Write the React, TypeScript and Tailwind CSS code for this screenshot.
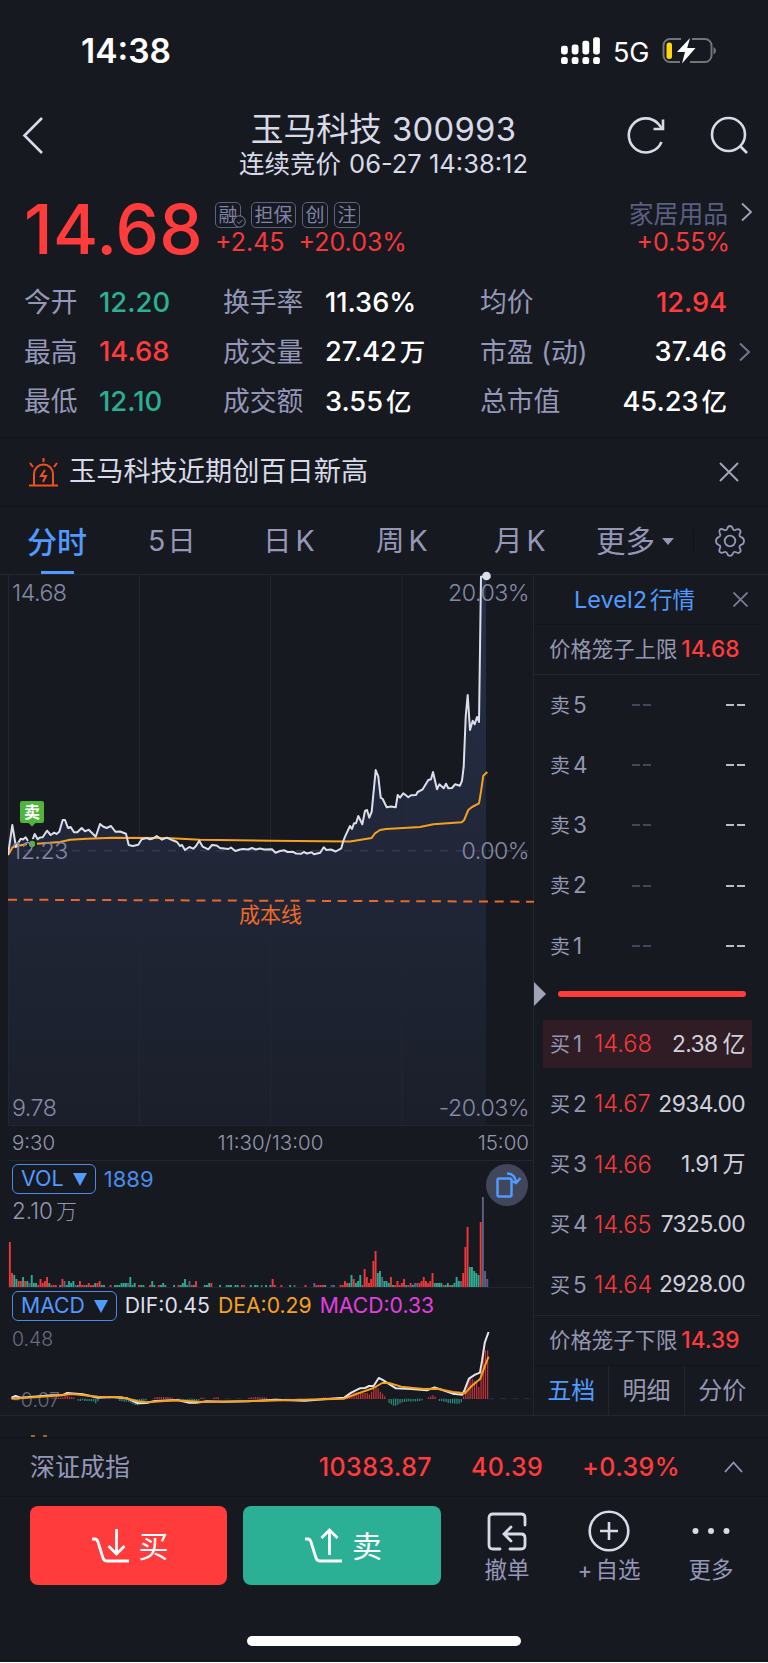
import type { ReactNode } from "react";

const PRICE_LINE =
  "8,855 12.3,825 16,847 18.5,842.5 20.7,838.7 23,839.5 25.7,837.3 28,841 32,841 34.7,834 37.7,839.3 40,837.5 42.7,837.3 47,830.7 50.7,835 54.3,832.7 56.5,834 59.3,831.7 62.7,820 65,820 68,828 70.7,827 74,832.3 77.3,832.3 81.7,828 85,831.3 88.7,829.7 92,833 95.7,836.7 98,830 100,824 103,826.5 106.7,828 111,826 115.3,831.7 120,831.5 126,833.7 128.7,845 132.7,846 138.3,844.7 141.7,839.3 146.7,838 150,839.3 153,838.5 156.7,836 162,839.7 166.7,837.7 172.7,840.3 177,842 180,846 182,845 185,850 189.3,847 193.3,848.7 196,846 199.3,840.7 202.7,846.7 208.3,849.3 212,845 216.7,845.5 220,848 228.3,849 231,847.5 235.3,851 240,849.5 243.3,849 248,849.5 252,848 256,849.5 260,848.5 264,849.5 272,849.3 275.5,852.7 280,851 284.4,850.3 287.5,852 292.7,851.7 296,853.5 301.3,853.7 304,852 307,853.5 311.6,852.3 314,854.3 320.2,852.7 323.7,847.3 326.4,850 331,849.5 335.7,851.5 341.3,848.3 343,842 345,836.7 350,826 352,829 354,823.3 356,823.3 358.3,816 362.3,824.3 365,811 367,810 369.3,817.7 371.7,811.7 375.7,770 378.3,776.7 380.7,797.7 382.7,799 386.7,807.3 391,806.5 395.7,807.3 397.7,795 400,797.7 403.3,793.3 408.3,797.3 411,795.3 416,795 417.7,792 422.7,789.3 428.3,780 431,779.3 433,772 437,789.3 439.3,784.3 443.7,788.3 446,783.7 448.3,788.3 452,788 455,784.3 460,785.7 462,780.7 463.7,766.7 465.7,716.7 467.7,695 470,730 472.7,720.7 474.7,724.3 477,717 479,722 481,576.7 486,576";

const AVG_LINE =
  "8,855 10,852 12.3,847.5 16,846 28,844 36.7,843.7 60,842 70,839.7 86.7,838.7 113,837.7 166.7,838 200,839.7 270,840.7 350,841.5 371.7,838 375,833.3 380,830 386,829 420,827 433.3,824.3 461.7,822.3 464,820.3 468.3,810 472,807 479,803.3 481,791.7 483.3,775.7 487.3,772";

// one entry per minute: height in px + color (r = up, g = down, n = flat)
const VOLUME =
  "45r 14r 12g 8g 6r 6r 10g 6r 6g 4n 12g 4g 4g 2r 8r 4r 6r 10r 4g 2r 2r 2r 0r 2g 8r 6n 2g 6g 4g 6g 2n 2g 6r 2r 2r 2g 4r 2r 2r 4g 4r 6r 2g 2g 0r 0r 2r 0r 2g 2g 2g 4g 4g 4g 4n 10g 2g 4g 0g 2r 2g 2g 0r 0g 2r 6g 2g 0g 2r 2g 4g 2g 0r 0r 0r 2g 0g 2r 2g 4g 8g 2g 6n 2r 2g 6r 0g 0g 0g 2g 2g 4g 4r 0r 0g 0r 2g 0r 0g 2g 2g 2g 0g 2g 2g 0r 2r 2n 0r 0r 2g 0r 2g 2g 0r 2n 0g 2g 0r 2g 8r 2r 0r 0r 2r 0g 0g 0r 2g 0g 2n 0g 0g 0r 0r 2r 0r 0g 0g 4n 2r 2r 2r 2r 2g 0g 0g 2n 2n 0g 0r 2r 2r 6r 4r 4g 12g 8r 4g 6g 12g 2r 18r 10r 4r 8r 26r 36r 14g 16g 10n 6g 6g 4g 10r 2g 2r 6r 2r 4r 8r 2g 2n 4r 2g 4n 4n 4r 6r 10r 6r 4r 6r 14r 4g 4g 4g 4g 2r 2g 4g 2r 2g 4g 10g 6g 6n 14r 40r 60r 20g 20g 16g 14g 12g 65r 90n 16n 8n"
    .split(" ");

const MACD_RUNS = [
  { from: 1, values: [6, 10, 8, 5, 3] },
  { from: 19, values: [5, 5, 4, 4, 4, 5, 10, 9, 7, 6, 5] },
  { from: 31, values: [-5, -6, -4, -6, -6, -6, -7, -7, -13, -7] },
  { from: 50, values: [-6, -7, -8, -8, -9, -12, -16, -18, -19, -16, -12, -8, -5] },
  { from: 66, values: [4, 6, 6, 6, 6, 6, 6, 5, 4] },
  { from: 79, values: [-5, -6, -7, -8, -8, -6, -6, -4] },
  { from: 87, values: [4, 4] },
  { from: 93, values: [4, 5, 5] },
  { from: 109, values: [4, 5, 5, 6, 6, 5, 5, 5, 4] },
  { from: 143, values: [5, 5, 4, 4, 5, 5, 5, 5, 4, 6, 10, 14, 18, 20, 20, 20, 20, 18, 18, 18, 18, 14, 22, 30, 38, 32, 22, 16, 8] },
  { from: 173, values: [-12, -16, -20, -20, -17, -13, -10, -9, -8, -7, -8, -7, -7, -7, -6, -4] },
  { from: 191, values: [5, 8, 11, 7] },
  { from: 196, values: [-6, -6, -8, -9, -12, -13, -13, -14, -14, -14, -10] },
  { from: 207, values: [8, 34, 50, 60, 60, 55, 48, 36, 88, 136, 146, 146] },
];

const DIF_LINE =
  "33,895 45,890 60,895 150,888 180,888 195,881 240,885 285,895 320,893 370,897 400,912 425,911 450,905 515,902 550,910 570,910 600,906 650,907 720,906 800,901 885,904 940,900 1000,895 1020,880 1045,867 1060,866 1072,860 1085,860 1100,836 1110,841 1150,867 1195,869 1240,873 1262,864 1285,872 1315,883 1343,886 1350,870 1362,838 1380,826 1394,820 1400,785 1408,730 1419,698";

const DEA_LINE =
  "33,898 150,890 210,884 285,892 350,893 400,906 425,909 510,903 590,908 700,906 850,902 1000,898 1040,882 1085,866 1110,851 1130,851 1165,862 1230,869 1270,868 1315,878 1350,882 1370,860 1395,838 1410,795 1419,772";

const stats = [
  { label: "今开", value: "12.20", color: "text-[#2bb092]", label2: "换手率", value2: "11.36%", unit2: "", label3: "均价", value3: "12.94", unit3: "", color3: "text-[#ff3b3b]" },
  { label: "最高", value: "14.68", color: "text-[#ff3b3b]", label2: "成交量", value2: "27.42", unit2: "万", label3: "市盈 (动)", value3: "37.46", unit3: "", color3: "text-white" },
  { label: "最低", value: "12.10", color: "text-[#2bb092]", label2: "成交额", value2: "3.55", unit2: "亿", label3: "总市值", value3: "45.23", unit3: "亿", color3: "text-white" },
];

const bids = [
  { level: 1, price: "14.68", amount: "2.38", unit: "亿" },
  { level: 2, price: "14.67", amount: "2934.00", unit: "" },
  { level: 3, price: "14.66", amount: "1.91", unit: "万" },
  { level: 4, price: "14.65", amount: "7325.00", unit: "" },
  { level: 5, price: "14.64", amount: "2928.00", unit: "" },
];

function StatusBar() {
  const columns = [12, 14, 19, 24];
  return (
    <div className="flex h-[100px] items-center pl-[81px] pr-[51px] text-white">
      <span className="mt-[4px] text-[33.500px] font-semibold leading-none">14:38</span>
      <div className="ml-auto flex items-center">
        <svg width="40" height="28" viewBox="0 0 40 28" fill="currentColor" className="mt-[2px]">
          {columns.map((h, i) => (
            <g key={i}>
              <rect x={i * 10.7} y={17.5 - h * 0.72} width="6.8" height={h * 0.72} rx="2.4" />
              <rect x={i * 10.7} y="20" width="6.8" height="7" rx="2.6" />
            </g>
          ))}
        </svg>
        <span className="ml-[12px] mt-[4px] text-[27px] leading-none tracking-[-0.300px]">5G</span>
        <svg width="55" height="28" viewBox="0 0 55 28" fill="none" className="ml-[13px] mt-[1px]">
          <path d="M19 2H8a6.5 6.5 0 0 0-6.500 6.500v10a6.500 6.500 0 0 0 6.500 6.500h10M30 2h13a6.500 6.500 0 0 1 6.500 6.500v10a6.500 6.500 0 0 1-6.500 6.500H28" stroke="#74757b" strokeWidth="2" />
          <path d="M51.500 10v7.500q2.500-1 2.500-3.750t-2.500-3.750Z" fill="#74757b" />
          <rect x="4.500" y="5.500" width="5.500" height="16.500" rx="2.500" fill="#ffd60a" />
          <path d="M28 1 15 15h8l-3 11.500L33.500 11h-8.300Z" fill="#fff" />
        </svg>
      </div>
    </div>
  );
}

function Header() {
  return (
    <div className="flex h-[90px] items-center justify-between pl-[22px] pr-[20px] text-[#d8dae8]">
      <svg width="118" height="40" viewBox="0 0 118 40" fill="none" stroke="currentColor" strokeWidth="2.600" className="-mt-[20px]">
        <path d="M20 3 2.500 20.500 20 38" />
      </svg>
      <div className="-mt-[2px] flex flex-col items-center">
        <div className="flex items-center text-[32.800px] leading-[40px]">
          <span>玉马科技</span>
          <span className="ml-[10px] tracking-[0.300px]">300993</span>
        </div>
        <div className="flex items-center text-[25.500px] leading-[30px]">
          <span>连续竞价</span>
          <span className="ml-[8px]">06-27 14:38:12</span>
        </div>
      </div>
      <svg width="121" height="40" viewBox="0 0 121 40" fill="none" stroke="currentColor" strokeWidth="2.600" className="-mt-[20px]">
        <path d="M34.500 27A17 17 0 1 1 31 8.500l4 5" />
        <path d="M36 4.500V14H26.500" />
        <circle cx="101.500" cy="19.500" r="16.500" />
        <path d="m113 31 7 7" />
      </svg>
    </div>
  );
}

function Tag({ children, checked }: { children: ReactNode; checked?: boolean }) {
  return (
    <span className="relative flex h-[26px] items-center rounded-[5px] border border-[#5d6182] px-[2.500px] text-[19px] leading-none text-[#7f83a5]">
      {children}
      {checked && (
        <svg width="13" height="13" viewBox="0 0 13 13" fill="#171921" stroke="#7f83a5" className="absolute -bottom-px -right-[6px]">
          <circle cx="6.500" cy="6.500" r="5.700" />
          <path d="m4 6.500 2 2 3.300-3.500" />
        </svg>
      )}
    </span>
  );
}

function Quote() {
  return (
    <div className="h-[247px] pl-[24px] pr-[15px] pt-[12px]">
      <div className="flex h-[76px]">
        <span className="w-[191px] text-[69px] font-medium leading-[54px] tracking-[0.300px] text-[#ff3b3b]">14.68</span>
        <div>
          <div className="flex gap-[6px]">
            <div className="mr-[4px]"><Tag checked>融</Tag></div>
            <Tag>担保</Tag>
            <Tag>创</Tag>
            <Tag>注</Tag>
          </div>
          <div className="flex gap-[14px] text-[25px] leading-[29px] text-[#f5383a]">
            <span>+2.45</span>
            <span>+20.03%</span>
          </div>
        </div>
        <div className="ml-auto flex">
          <div className="mr-[13px] text-right">
            <div className="text-[24.800px] leading-[24px] text-[#5b5f80]">家居用品</div>
            <div className="-mr-[2px] mt-[2px] text-[25px] leading-[29px] text-[#f5383a]">+0.55%</div>
          </div>
          <svg width="12" height="20" viewBox="0 0 12 20" fill="none" stroke="#a3a6b8" strokeWidth="1.800">
            <path d="m1 1.500 9 8.500-9 8.500" />
          </svg>
        </div>
      </div>
      {stats.map((s) => (
        <div key={s.label} className="flex h-[49.300px] items-center text-[26.800px] leading-none">
          <span className="w-[75px] text-[#9497b6]">{s.label}</span>
          <span className={`w-[124px] text-[27.400px] font-medium ${s.color}`}>{s.value}</span>
          <span className="w-[102px] text-[#9497b6]">{s.label2}</span>
          <span className="w-[155px] text-[27.200px] font-medium text-white">
            {s.value2}
            {s.unit2 && <span className="ml-[3px] text-[25.500px]">{s.unit2}</span>}
          </span>
          <span className="text-[#9497b6]">{s.label3}</span>
          <span className={`ml-auto text-[27.200px] font-medium ${s.color3}`}>
            {s.value3}
            {s.unit3 && <span className="ml-[3px] text-[25.500px]">{s.unit3}</span>}
          </span>
          <span className="ml-[11px] w-[15px] pl-px">
            {s.value3 === "37.46" && (
              <svg width="12" height="20" viewBox="0 0 12 20" fill="none" stroke="#74778c" strokeWidth="2">
                <path d="m1 1.500 9 8.500-9 8.500" />
              </svg>
            )}
          </span>
        </div>
      ))}
    </div>
  );
}

function Notice() {
  return (
    <div className="flex h-[70px] items-center border-y border-[#11131a] pl-[28px] pr-[29px]">
      <svg width="31" height="31" viewBox="0 0 31 31" fill="none" stroke="#f4501e" strokeWidth="2" className="shrink-0">
        <path d="M1 28.500h29M6 28V17a9.500 9.500 0 0 1 19 0v11M15.500 1v4M2 6l3 4M29 6l-3 4" />
        <path d="m17 13-4 6h5l-3 6" />
      </svg>
      <span className="ml-[10px] text-[27.200px] leading-none text-[#d8dae8]">玉马科技近期创百日新高</span>
      <svg width="20" height="20" viewBox="0 0 20 20" fill="none" stroke="#a0a3b8" strokeWidth="2" className="ml-auto">
        <path d="m1 1 18 18M19 1 1 19" />
      </svg>
    </div>
  );
}

function Tabs() {
  return (
    <div className="flex h-[68px] items-center border-b border-[#222532] pl-[27px] pr-[22px] pt-[2px] text-[28.500px] leading-none text-[#9497b6]">
      <div className="relative -mt-[2px] flex h-[67px] w-[121px] items-center pt-[2px] text-[30px] font-medium text-[#519aff]">
        分时
        <div className="absolute bottom-0 left-[14px] h-[3px] w-[33px] bg-[#519aff]" />
      </div>
      <span className="w-[115px]">5<span className="ml-[2px]">日</span></span>
      <span className="w-[113px]">日<span className="ml-[4px]">K</span></span>
      <span className="w-[118px]">周<span className="ml-[4px]">K</span></span>
      <span className="w-[102px]">月<span className="ml-[4px]">K</span></span>
      <span className="text-[29.500px]">更多</span>
      <div className="ml-[7px] border-x-[6px] border-t-[7px] border-x-transparent border-t-[#9497b6]" />
      <div className="ml-[19px] h-[24px] w-px bg-[#11131a]" />
      <svg width="32" height="32" viewBox="0 0 32 32" fill="none" stroke="#9497b6" strokeWidth="1.800" strokeLinejoin="round" className="-mt-[2px] ml-auto">
        <path d="M13.300 3.500q.8-2.500 2.700-2.500t2.700 2.500 3.200 1.200q2.500-1.200 3.900.1t.1 3.900 1.300 3.400q2.800 1 2.800 3.900t-2.800 3.900-1.300 3.400.1 3.900-3.900.1q-2.400-1.200-3.200 1.200t-2.900 2.400-2.900-2.400-3.200-1.200q-2.500 1.200-3.900-.1t-.1-3.900-1.300-3.400q-2.600-1-2.600-3.900t2.600-3.900 1.300-3.400-.1-3.900 3.900-.1 3.600-1.200Z" />
        <circle cx="16" cy="16" r="5.300" />
      </svg>
    </div>
  );
}

function PriceChart() {
  return (
    <div className="relative h-[551px] text-[23.200px] font-light leading-none tracking-[-0.500px] text-[#8689a3]">
      <svg width="526" height="558" viewBox="8 568 526 558" className="absolute -top-[7px] left-0">
        <defs>
          <linearGradient id="area" x1="0" y1="575" x2="0" y2="1125" gradientUnits="userSpaceOnUse">
            <stop offset="0" stopColor="#26304a" />
            <stop offset="0.500" stopColor="#212738" />
            <stop offset="1" stopColor="#1b1f2b" />
          </linearGradient>
        </defs>
        <polygon points={`8,1125 ${PRICE_LINE} 486,1125`} fill="url(#area)" />
        <path d="M8.500 575v551M139.500 575v551M270.500 575v551M402 575v551M533.500 575v551" stroke="#222532" strokeWidth="1" />
        <path d="M8 1125.500h526" stroke="#222532" />
        <path d="M24 850.700h510" stroke="#34384b" strokeWidth="1.500" strokeDasharray="8 8" />
        <path d="M8 899.700 534 901.700" stroke="#e8682a" strokeWidth="2" strokeDasharray="9 6.700" />
        <polyline points={AVG_LINE} fill="none" stroke="#f5a11f" strokeWidth="2" strokeLinejoin="round" />
        <polyline points={PRICE_LINE} fill="none" stroke="#dcdfeb" strokeWidth="2" strokeLinejoin="round" />
        <circle cx="486.500" cy="576" r="4.300" fill="#dcdfeb" />
        <circle cx="32" cy="844" r="5" fill="#171921" />
        <circle cx="32" cy="844" r="3.200" fill="#4fb53c" />
        <path d="M22 801h20a2 2 0 0 1 2 2v18a2 2 0 0 1-2 2h-6.500l-3.500 3.500-3.500-3.500H22a2 2 0 0 1-2-2v-18a2 2 0 0 1 2-2Z" fill="#4fb53c" />
      </svg>
      <span className="absolute left-[4px] top-[7px]">14.68</span>
      <span className="absolute right-[4px] top-[7px]">20.03%</span>
      <span className="absolute left-[4px] top-[265px]">12.23</span>
      <span className="absolute right-[4px] top-[265px]">0.00%</span>
      <span className="absolute bottom-[6px] left-[4px]">9.78</span>
      <span className="absolute bottom-[6px] right-[4px]">-20.03%</span>
      <span className="absolute left-[231px] top-[329px] text-[21px] font-normal tracking-normal text-[#f06a28]">成本线</span>
      <span className="absolute left-[16px] top-[229px] text-[16px] font-bold tracking-normal text-white">卖</span>
    </div>
  );
}

function IndicatorButton({ children }: { children: ReactNode }) {
  return (
    <div className="flex h-[30px] items-center gap-[9px] rounded-[6px] border border-[#4a8be6] px-[8px] leading-none text-[#519aff]">
      {children}
      <div className="border-x-[7.500px] border-t-[13px] border-x-transparent border-t-[#519aff]" />
    </div>
  );
}

function Volume() {
  return (
    <div className="relative h-[127px] border-t border-[#222532]">
      <svg width="526" height="100" viewBox="0 0 526 100" className="absolute bottom-0 left-0">
        {VOLUME.map((bar, i) => {
          const h = parseInt(bar);
          const fill = bar.endsWith("r") ? "#ef383a" : bar.endsWith("g") ? "#2bab90" : "#5e6281";
          return <rect key={i} x={0.9 + i * 2.19} y={100 - h} width="1.9" height={h} fill={fill} />;
        })}
      </svg>
      <div className="flex items-center pl-[4px] pt-[3px] text-[21.500px] text-[#4a8be6]">
        <IndicatorButton>VOL</IndicatorButton>
        <span className="ml-[8px] text-[22px] leading-none">1889</span>
      </div>
      <div className="pl-[4px] pt-[6px] text-[22.500px] font-light leading-none text-[#9497ae]">
        2.10<span className="ml-[3px] text-[21px]">万</span>
      </div>
      <div className="absolute right-[5px] top-[3px] flex size-[42px] items-center justify-center rounded-full bg-[#42465b]">
        <svg width="28" height="28" viewBox="0 0 28 28" fill="none" stroke="#519aff" strokeWidth="2.500">
          <rect x="4.500" y="7.500" width="14" height="18" rx="1.500" />
          <path d="M14 2.500c5 0 8 2.500 9 8M18 9.500l5 2.500 4.500-5" />
        </svg>
      </div>
    </div>
  );
}

function Macd() {
  return (
    <div className="relative h-[128px] border-t border-[#222532]">
      <svg width="526" height="96" viewBox="23 659 1528 288" preserveAspectRatio="none" className="absolute bottom-0 left-0">
        <path d="M24 898h1526" stroke="#2a2d3b" strokeDasharray="6 6" vectorEffect="non-scaling-stroke" />
        {MACD_RUNS.map((run) =>
          run.values.map((v, i) => (
            <rect
              key={`${run.from}-${i}`}
              x={28 + (run.from + i) * 6.36}
              y={v > 0 ? 899 - v : 899}
              width="3.6"
              height={Math.abs(v)}
              fill={v > 0 ? "#c23336" : "#278f7a"}
            />
          ))
        )}
      </svg>
      <span className="absolute bottom-[5px] left-[4px] text-[19.500px] font-light leading-none text-[#696c80]">-0.07</span>
      <svg width="526" height="96" viewBox="23 659 1528 288" preserveAspectRatio="none" className="absolute bottom-0 left-0" fill="none" strokeWidth="2">
        <polyline points={DIF_LINE} stroke="#e4e6ee" strokeLinejoin="round" vectorEffect="non-scaling-stroke" />
        <polyline points={DEA_LINE} stroke="#f5a11f" strokeLinejoin="round" vectorEffect="non-scaling-stroke" />
      </svg>
      <div className="flex items-center pl-[4px] pt-[3px] text-[21.200px] text-[#4a8be6]">
        <IndicatorButton>MACD</IndicatorButton>
        <span className="ml-[8px] leading-none text-[#dcdfeb]">DIF:0.45</span>
        <span className="ml-[8px] leading-none text-[#f5a11f]">DEA:0.29</span>
        <span className="ml-[8px] leading-none text-[#e23fe0]">MACD:0.33</span>
      </div>
      <div className="pl-[4px] pt-[9px] text-[19.500px] font-light leading-none text-[#696c80]">0.48</div>
    </div>
  );
}

function OrderBook() {
  return (
    <div className="flex h-[841px] w-[226px] flex-col text-[#9497b0]">
      <div className="flex h-[50px] items-center border-b border-[#11131a] pl-[40px] pr-[12px]">
        <span className="text-[23.500px] leading-none text-[#519aff]">Level2<span className="ml-[3px] text-[22.500px]">行情</span></span>
        <svg width="15" height="15" viewBox="0 0 15 15" fill="none" stroke="#7d8096" strokeWidth="1.600" className="ml-auto">
          <path d="m.5.500 14 14M14.500.500l-14 14" />
        </svg>
      </div>
      <div className="flex h-[50px] items-center border-b border-[#222532] pl-[15px] leading-none">
        <span className="text-[21.400px]">价格笼子上限</span>
        <span className="ml-[4px] text-[22.600px] font-medium text-[#ff3b3b]">14.68</span>
      </div>
      {[5, 4, 3, 2, 1].map((level) => (
        <div key={level} className="flex h-[60.200px] items-center pl-[16px] pr-[15px] leading-none">
          <span className="w-[82px] text-[20px]">卖<span className="ml-[3px] text-[22.500px]">{level}</span></span>
          <span className="flex gap-[3px]">
            <i className="h-[2px] w-[8px] bg-[#44475c]" />
            <i className="h-[2px] w-[8px] bg-[#44475c]" />
          </span>
          <span className="ml-auto flex gap-[3px]">
            <i className="h-[2px] w-[8px] bg-[#b9bbc8]" />
            <i className="h-[2px] w-[8px] bg-[#b9bbc8]" />
          </span>
        </div>
      ))}
      <div className="mb-[2px] flex h-[36px] items-center">
        <div className="border-y-[12px] border-l-[12px] border-y-transparent border-l-[#a0a3b5]" />
        <div className="ml-[12px] h-[6px] w-[188px] rounded-full bg-[#ff3b3b]" />
      </div>
      {bids.map((b) => (
        <div key={b.level} className="flex h-[60.200px] items-center pl-[9px] pr-[8px] leading-none">
          <div className={`flex h-[48px] w-full items-center px-[7px] ${b.level === 1 ? "bg-[#2f1c24]" : ""}`}>
            <span className="w-[44px] text-[20px]">买<span className="ml-[3px] text-[22.500px]">{b.level}</span></span>
            <span className="text-[23.500px] font-light text-[#f5383a]">{b.price}</span>
            <span className="ml-auto text-[22.800px] tracking-[-0.600px] text-[#cfd1dc]">
              {b.amount}
              {b.unit && <span className="ml-[5px] text-[23px]">{b.unit}</span>}
            </span>
          </div>
        </div>
      ))}
      <div className="flex h-[51px] items-center border-y border-t-[#222532] border-b-[#11131a] pl-[15px] leading-none">
        <span className="text-[21.400px]">价格笼子下限</span>
        <span className="ml-[4px] text-[22.600px] font-medium text-[#ff3b3b]">14.39</span>
      </div>
      <div className="flex flex-1 items-center divide-x divide-[#222532] text-[24px] leading-none">
        <span className="flex h-full w-[76px] items-center justify-center text-[#519aff]">五档</span>
        <span className="flex h-full w-[76px] items-center justify-center">明细</span>
        <span className="flex h-full w-[76px] items-center justify-center">分价</span>
      </div>
    </div>
  );
}

function IndexBar() {
  return (
    <div className="flex h-[60px] items-center border-y border-[#11131a] pl-[30px] pr-[25px] text-[25px] font-medium leading-none tracking-[0.400px] text-[#ff3b3b]">
      <span className="font-normal tracking-normal text-[#9497b6]">深证成指</span>
      <span className="ml-auto">10383.87</span>
      <span className="ml-[39px]">40.39</span>
      <span className="ml-[39px]">+0.39%</span>
      <svg width="19" height="12" viewBox="0 0 19 12" fill="none" stroke="#9497b6" strokeWidth="1.800" className="ml-[44px]">
        <path d="m1 11 8.500-9.500L18 11" />
      </svg>
    </div>
  );
}

function Actions() {
  return (
    <div className="flex h-[138px] items-start pl-[30px] pr-[34px] pt-[9px] leading-none">
      <div className="flex h-[79px] w-[197px] items-center justify-center gap-[9px] rounded-[8px] bg-[#ff3b3b] pl-[3px] text-[30px] text-white">
        <svg width="38" height="36" viewBox="0 0 38 36" fill="none" stroke="currentColor" strokeWidth="2.800">
          <path d="M0 11h3q2 0 3 3l5 16q1 3 4 3h22M24.500 1v25M16.500 18l8 8 8-8" />
        </svg>
        买
      </div>
      <div className="ml-[16px] flex h-[79px] w-[198px] items-center justify-center gap-[9px] rounded-[8px] bg-[#2bb096] pl-[3px] text-[30px] text-white">
        <svg width="38" height="36" viewBox="0 0 38 36" fill="none" stroke="currentColor" strokeWidth="2.800">
          <path d="M0 11h3q2 0 3 3l5 16q1 3 4 3h22M24.500 27V2M16.500 10l8-8 8 8" />
        </svg>
        卖
      </div>
      <div className="ml-[43px] flex w-[46px] flex-col items-center text-[22.500px] text-[#9497b6]">
        <svg width="42" height="42" viewBox="0 0 42 42" fill="none" stroke="#d8dae8" strokeWidth="2.800" strokeLinecap="round" className="mb-[7px] mt-[4px]">
          <path d="M39 15V8q0-4-4-4H7Q3 4 3 8v27q0 4 4 4h7M24 39h11q4 0 4-4v-7q0-4-4-4H19M25 17l-7 7 7 7" />
        </svg>
        撤单
      </div>
      <div className="ml-[47px] flex w-[64px] flex-col items-center text-[22.500px] text-[#9497b6]">
        <svg width="42" height="42" viewBox="0 0 42 42" fill="none" stroke="#d8dae8" strokeWidth="2.600" className="mb-[7px] mt-[4px]">
          <circle cx="21" cy="21" r="19.300" />
          <path d="M21 12v18M12 21h18" />
        </svg>
        <span className="whitespace-nowrap">+<span className="ml-[3px]">自选</span></span>
      </div>
      <div className="ml-auto flex w-[46px] flex-col items-center text-[22.500px] text-[#9497b6]">
        <svg width="42" height="42" viewBox="0 0 42 42" fill="#d8dae8" className="mb-[7px] mt-[4px]">
          <circle cx="5.500" cy="21" r="3" />
          <circle cx="21" cy="21" r="3" />
          <circle cx="36.500" cy="21" r="3" />
        </svg>
        更多
      </div>
    </div>
  );
}

export default function App() {
  return (
    <div className="flex h-[1663px] w-[768px] flex-col overflow-hidden border-b border-white bg-[#171921] font-['Inter','Noto_Sans_CJK_SC',sans-serif]">
      <StatusBar />
      <Header />
      <Quote />
      <Notice />
      <Tabs />
      <div className="flex h-[841px] border-b border-[#222532] pl-[8px]">
        <div className="w-[526px] border-r border-[#222532]">
          <PriceChart />
          <div className="grid h-[34px] grid-cols-3 items-center pl-[4px] pr-[4px] text-[20.500px] font-light leading-none text-[#9497ae]">
            <span>9:30</span>
            <span className="text-center">11:30/13:00</span>
            <span className="text-right">15:00</span>
          </div>
          <Volume />
          <Macd />
        </div>
        <OrderBook />
      </div>
      <div className="flex h-[21px] items-end gap-[8px] pl-[31px]">
        <div className="h-[2px] w-[4px] bg-[#a8641a]" />
        <div className="h-[2px] w-[4px] bg-[#a8641a]" />
      </div>
      <IndexBar />
      <Actions />
      <div className="mx-auto mt-[1px] h-[10px] w-[274px] rounded-full bg-white" />
    </div>
  );
}
